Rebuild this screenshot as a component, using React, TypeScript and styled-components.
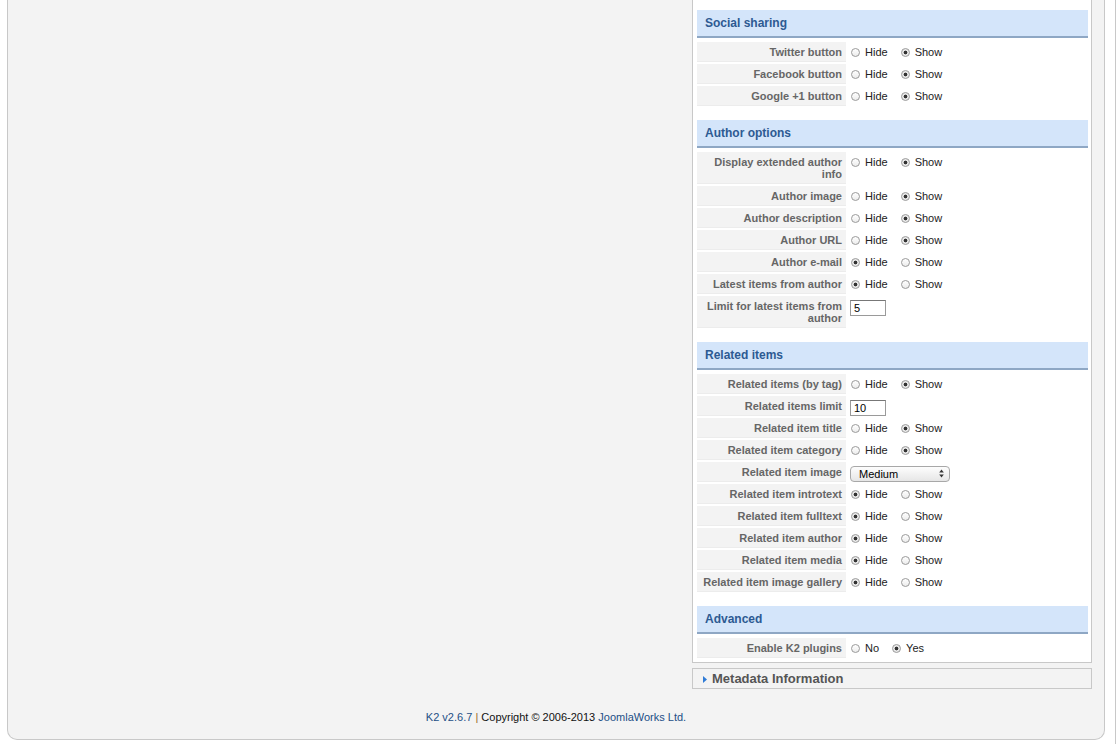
import styled, { createGlobalStyle } from "styled-components";

type Row = {
  label: string;
  kind: "radio" | "text" | "select";
  options?: string[];
  selected?: number;
  value?: string;
};

type Section = { title: string; rows: Row[] };

const hs = (selected: number): Pick<Row, "kind" | "options" | "selected"> => ({
  kind: "radio",
  options: ["Hide", "Show"],
  selected,
});

const sections: Section[] = [
  {
    title: "Social sharing",
    rows: [
      { label: "Twitter button", ...hs(1) },
      { label: "Facebook button", ...hs(1) },
      { label: "Google +1 button", ...hs(1) },
    ],
  },
  {
    title: "Author options",
    rows: [
      { label: "Display extended author info", ...hs(1) },
      { label: "Author image", ...hs(1) },
      { label: "Author description", ...hs(1) },
      { label: "Author URL", ...hs(1) },
      { label: "Author e-mail", ...hs(0) },
      { label: "Latest items from author", ...hs(0) },
      { label: "Limit for latest items from author", kind: "text", value: "5" },
    ],
  },
  {
    title: "Related items",
    rows: [
      { label: "Related items (by tag)", ...hs(1) },
      { label: "Related items limit", kind: "text", value: "10" },
      { label: "Related item title", ...hs(1) },
      { label: "Related item category", ...hs(1) },
      { label: "Related item image", kind: "select", value: "Medium" },
      { label: "Related item introtext", ...hs(0) },
      { label: "Related item fulltext", ...hs(0) },
      { label: "Related item author", ...hs(0) },
      { label: "Related item media", ...hs(0) },
      { label: "Related item image gallery", ...hs(0) },
    ],
  },
  {
    title: "Advanced",
    rows: [
      { label: "Enable K2 plugins", kind: "radio", options: ["No", "Yes"], selected: 1 },
    ],
  },
];

const App = () => {
  return (
    <>
      <GlobalStyle />
      <Page>
        <Container>
          <Main>
            <LeftSpace />
            <RightColumn>
              <Panel>
                {sections.map((s) => (
                  <SectionBlock key={s.title}>
                    <SectionHeader>{s.title}</SectionHeader>
                    <Rows>
                      {s.rows.map((r) => (
                        <ParamRow key={r.label}>
                          <Label>{r.label}</Label>
                          <Value>
                            {r.kind === "radio" &&
                              r.options!.map((o, i) => (
                                <Option key={o}>
                                  <Radio $checked={i === r.selected} />
                                  {o}
                                </Option>
                              ))}
                            {r.kind === "text" && <TextBox>{r.value}</TextBox>}
                            {r.kind === "select" && (
                              <SelectBox>
                                {r.value}
                                <Arrows>
                                  <svg width="5" height="9" viewBox="0 0 5 9">
                                    <path d="M2.5 0.5 L4.8 3.5 L0.2 3.5 Z" fill="#333" />
                                    <path d="M2.5 8.5 L4.8 5.5 L0.2 5.5 Z" fill="#333" />
                                  </svg>
                                </Arrows>
                              </SelectBox>
                            )}
                          </Value>
                        </ParamRow>
                      ))}
                    </Rows>
                  </SectionBlock>
                ))}
              </Panel>
              <Metadata>
                <Triangle>
                  <svg width="4" height="7" viewBox="0 0 4 7">
                    <path d="M0 0 L4 3.5 L0 7 Z" fill="#2f7bd6" />
                  </svg>
                </Triangle>
                Metadata Information
              </Metadata>
            </RightColumn>
          </Main>
          <Footer>
            <FooterLink>K2 v2.6.7</FooterLink> <Sep>|</Sep> Copyright © 2006-2013{" "}
            <FooterLink>JoomlaWorks Ltd.</FooterLink>
          </Footer>
        </Container>
        <SideStrip />
      </Page>
    </>
  );
};

export default App;

const GlobalStyle = createGlobalStyle`
  html, body {
    margin: 0;
    padding: 0;
    background: #fff;
    font-family: "Liberation Sans", Arial, sans-serif;
    overflow: hidden;
  }
`;

const Page = styled.div`
  display: flex;
  height: 744px;
  width: 1118px;
`;

const Container = styled.div`
  box-sizing: border-box;
  margin-left: 7px;
  width: 1098px;
  height: 740px;
  background: #f3f3f3;
  border: 1px solid #c8c8c8;
  border-top: none;
  border-radius: 0 0 10px 10px;
  display: flex;
  flex-direction: column;
`;

const SideStrip = styled.div`
  margin-left: 10px;
  width: 1px;
  height: 744px;
  background: #c8c8c8;
`;

const Main = styled.div`
  display: flex;
`;

const LeftSpace = styled.div`
  flex: 1;
`;

const RightColumn = styled.div`
  width: 400px;
  margin-right: 12px;
  display: flex;
  flex-direction: column;
`;

const Panel = styled.div`
  box-sizing: border-box;
  background: #fff;
  border: 1px solid #c8c8c8;
  border-top: none;
  padding: 10px 3px 4px 4px;
`;

const SectionBlock = styled.div`
  margin-bottom: 14px;
  &:last-child {
    margin-bottom: 0;
  }
`;

const SectionHeader = styled.div`
  height: 26px;
  line-height: 26px;
  background: #d4e5fa;
  border-bottom: 2px solid #8ea7c4;
  padding-left: 8px;
  font-size: 12px;
  font-weight: bold;
  color: #2d5a92;
`;

const Rows = styled.div`
  margin-top: 4px;
  display: flex;
  flex-direction: column;
  gap: 2px;
`;

const ParamRow = styled.div`
  display: grid;
  grid-template-columns: 149px 1fr;
  column-gap: 2px;
  font-size: 11px;
  line-height: 12px;
`;

const Label = styled.div`
  box-sizing: border-box;
  background: #f3f3f3;
  border-bottom: 1px solid #ececec;
  padding: 4px 4px 3px 6px;
  text-align: right;
  font-weight: bold;
  color: #666;
`;

const Value = styled.div`
  display: flex;
  align-items: flex-start;
  gap: 13px;
  padding: 4px 0 0 3px;
  color: #222;
`;

const Option = styled.label`
  display: flex;
  align-items: center;
  gap: 5px;
  height: 12px;
`;

const Radio = styled.span<{ $checked: boolean }>`
  box-sizing: border-box;
  width: 9px;
  height: 9px;
  border-radius: 50%;
  border: 1px solid #9a9a9a;
  background: ${(p) =>
    p.$checked
      ? "radial-gradient(circle, #333 0 1.6px, #e9e9e9 2.2px)"
      : "linear-gradient(#fff, #ececec)"};
`;

const TextBox = styled.div`
  box-sizing: border-box;
  margin-left: -1px;
  width: 36px;
  height: 16px;
  border: 1px solid #9a9a9a;
  border-top-color: #777;
  padding: 1px 3px 0;
  font-size: 11px;
  line-height: 13px;
  color: #000;
  background: #fff;
`;

const SelectBox = styled.div`
  box-sizing: border-box;
  position: relative;
  margin-left: -1px;
  width: 100px;
  height: 16px;
  border: 1px solid #a8a8a8;
  border-radius: 4px;
  background: linear-gradient(#fdfdfd, #e6e6e6);
  padding-left: 8px;
  font-size: 11px;
  line-height: 14px;
  color: #000;
`;

const Arrows = styled.span`
  position: absolute;
  right: 5px;
  top: 2px;
  display: flex;
`;

const Metadata = styled.div`
  box-sizing: border-box;
  margin-top: 5px;
  height: 21px;
  border: 1px solid #c8c8c8;
  background: #f3f3f3;
  display: flex;
  align-items: center;
  gap: 5px;
  padding-left: 10px;
  font-size: 13px;
  font-weight: bold;
  color: #555;
`;

const Triangle = styled.span`
  display: flex;
  margin-top: 1px;
`;

const Footer = styled.div`
  margin-top: 21px;
  text-align: center;
  font-size: 11px;
  line-height: 14px;
  color: #111;
`;

const FooterLink = styled.span`
  color: #1d4f86;
`;

const Sep = styled.span`
  color: #9a6a2a;
`;
